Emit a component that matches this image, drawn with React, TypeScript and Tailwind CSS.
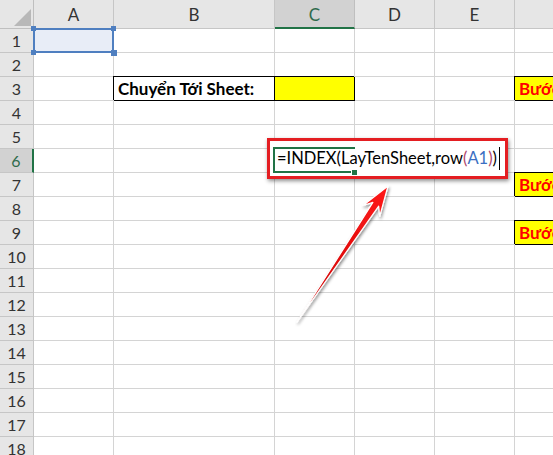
import { FC } from 'react';

const cols = ['A', 'B', 'C', 'D', 'E', 'F'];
const rows = Array.from({ length: 18 }, (_, i) => i + 1);

const yellowSteps: Record<string, string> = {
  F3: 'Bước 1:',
  F7: 'Bước 2:',
  F9: 'Bước 3:',
};

const Cell: FC<{ col: string; row: number }> = ({ col, row }) => {
  const key = col + row;

  if (key === 'A1') {
    return (
      <div className="relative border-r border-b border-[#d4d4d4] bg-[#e8edf7]">
        <div className="absolute -left-px -top-px -right-px -bottom-px border-2 border-[#4f7fc0]" />
        <span className="absolute -left-[3px] -top-[3px] h-[5px] w-[5px] bg-[#4f7fc0]" />
        <span className="absolute -right-[3px] -top-[3px] h-[5px] w-[5px] bg-[#4f7fc0]" />
        <span className="absolute -left-[3px] -bottom-[3px] h-[5px] w-[5px] bg-[#4f7fc0]" />
        <span className="absolute -right-[4px] -bottom-[4px] h-[6px] w-[6px] bg-[#4f7fc0]" />
      </div>
    );
  }

  if (key === 'B3') {
    return (
      <div className="flex items-center whitespace-nowrap border-r border-b border-black pl-[4px] text-[17px] font-bold text-black shadow-[-1px_-1px_0_0_#000]">
        Chuyển Tới Sheet:
      </div>
    );
  }

  if (key === 'C3') {
    return <div className="border-r border-b border-black bg-[#ffff00] shadow-[-1px_-1px_0_0_#000]" />;
  }

  if (yellowSteps[key]) {
    return (
      <div className="flex items-center overflow-hidden whitespace-nowrap border-r border-b border-black bg-[#ffff00] pl-[4px] text-[17px] font-bold text-[#ff0000] shadow-[-1px_-1px_0_0_#000]">
        {yellowSteps[key]}
      </div>
    );
  }

  return <div className="border-r border-b border-[#d4d4d4]" />;
};

export default function App() {
  return (
    <div className="relative h-[455px] w-[553px] overflow-hidden bg-white font-['Lato','Open_Sans',sans-serif] text-black">
      <div className="grid grid-cols-[34px_80px_161px_80px_80px_80px_120px] grid-rows-[29px_repeat(18,24px)]">
        {/* corner */}
        <div className="relative border-r border-b border-[#bfbfbf] bg-[#e6e6e6]">
          <svg className="absolute bottom-[2px] right-[2px]" width="17" height="17" viewBox="0 0 17 17">
            <polygon points="17,0 17,17 0,17" fill="#b8b8b8" />
          </svg>
        </div>
        {/* column headers */}
        {cols.map((c) =>
          c === 'C' ? (
            <div
              key={c}
              className="flex items-center justify-center border-r border-b-2 border-r-[#bfbfbf] border-b-[#217346] bg-[#d2d2d2] pt-[2px] text-[17px] text-[#2f6b4c]">
              {c}
            </div>
          ) : (
            <div
              key={c}
              className="flex items-center justify-center border-r border-b border-[#c6c6c6] bg-[#e6e6e6] pt-[2px] text-[17px] text-[#333]">
              {c}
            </div>
          )
        )}
        {rows.map((r) => (
          <div key={r} className="contents">
            {r === 6 ? (
              <div className="flex items-center justify-center border-r-2 border-b border-r-[#217346] border-b-[#c6c6c6] bg-[#d2d2d2] text-[16px] text-[#2f6b4c]">
                {r}
              </div>
            ) : (
              <div className="flex items-center justify-center border-r border-b border-[#c6c6c6] bg-[#e6e6e6] text-[16px] text-[#333]">
                {r}
              </div>
            )}
            {cols.map((c) => (
              <Cell key={c + r} col={c} row={r} />
            ))}
          </div>
        ))}
      </div>

      {/* in-cell editor for C6, highlighted with a red frame */}
      <div className="absolute left-[267px] top-[138px] flex h-[41px] w-[241px] items-center border-[3px] border-[#e41e22] bg-white pl-[7px] shadow-[1px_2px_4px_rgba(0,0,0,0.45)]">
        <div className="absolute left-[3px] top-[6px] h-[26px] w-[82px] border-t-2 border-l-2 border-b-2 border-[#217346]" />
        <span className="absolute left-[82px] top-[29px] h-[5px] w-[5px] bg-[#217346] outline outline-1 outline-white" />
        <span className="relative whitespace-nowrap text-[16.5px] text-black">
          =INDEX(LayTenSheet,row<span className="text-[#b0476e]">(</span>
          <span className="text-[#3b6fc2]">A1</span>
          <span className="text-[#b0476e]">)</span>)
        </span>
        <span className="relative ml-[2px] h-[23px] w-px bg-black" />
      </div>

      {/* arrow */}
      <svg className="pointer-events-none absolute inset-0" width="553" height="455" viewBox="0 0 553 455">
        <defs>
          <linearGradient id="arrowFill" x1="0" y1="1" x2="1" y2="0">
            <stop offset="0" stopColor="#c80000" />
            <stop offset="1" stopColor="#ff1a1a" />
          </linearGradient>
          <filter id="arrowShadow" x="-20%" y="-20%" width="140%" height="140%">
            <feDropShadow dx="1" dy="2" stdDeviation="1.6" floodColor="#000" floodOpacity="0.45" />
          </filter>
        </defs>
        <polygon
          points="297,322 372.9,202.4 363,205.5 388,186 379.7,216.5 378.7,206.2"
          fill="url(#arrowFill)"
          stroke="#ffffff"
          strokeWidth="1.2"
          strokeLinejoin="round"
          filter="url(#arrowShadow)"
        />
      </svg>
    </div>
  );
}
